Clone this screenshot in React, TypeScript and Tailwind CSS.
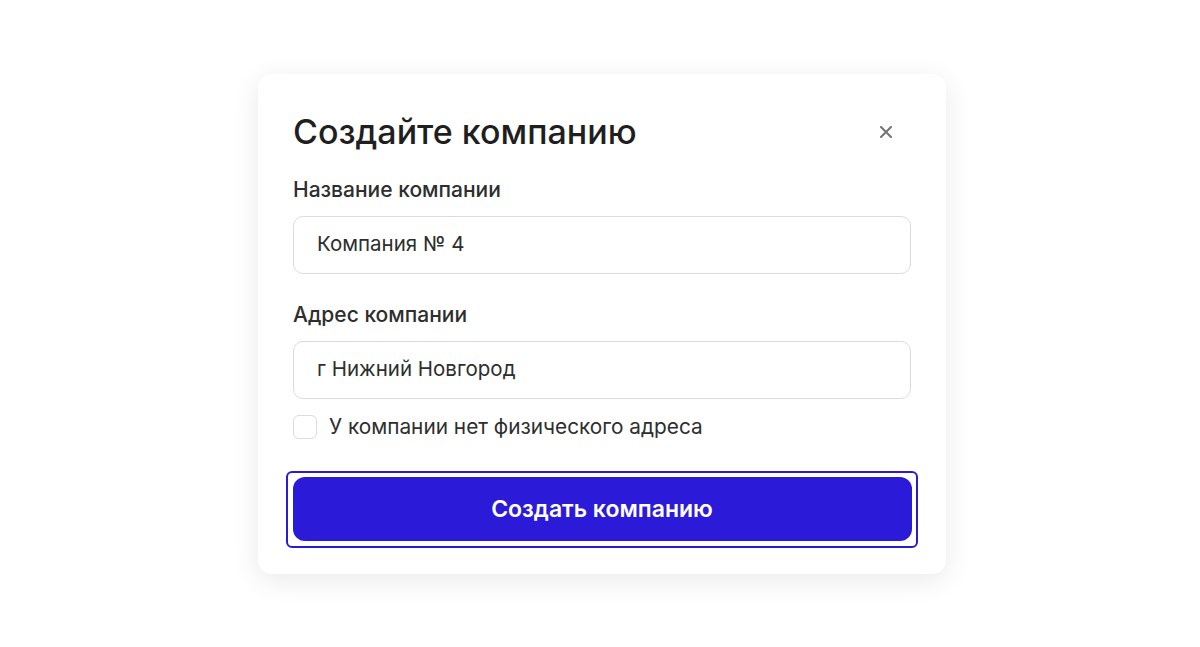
import React from "react";

export default function App() {
  return (
    <div className="flex h-[647px] w-full items-center justify-center bg-white pl-[4px]" style={{ fontFamily: "Inter, 'Noto Sans', sans-serif" }}>
      <div className="w-[688px] rounded-[14px] bg-white px-[35px] pt-[36px] pb-[26px] shadow-[0_6px_28px_rgba(0,0,0,0.09)]">
        <div className="flex items-center justify-between">
          <h1 className="text-[34px] font-medium leading-[44px] text-[#1f1f1f]">Создайте компанию</h1>
          <button className="mr-[13px] flex h-6 w-6 items-center justify-center text-[#737373]">
            <svg width="12" height="12" viewBox="0 0 12 12" fill="none">
              <path d="M1 1L11 11M11 1L1 11" stroke="currentColor" strokeWidth="2" strokeLinecap="round" />
            </svg>
          </button>
        </div>
        <div className="mt-[22px] text-[21px] font-medium leading-[28px] text-[#2e2e2e]">Название компании</div>
        <div className="mt-[12px] flex h-[58px] items-center rounded-[10px] border border-[#dcdcdc] px-[23px] text-[20.5px] text-[#2e2e2e]">
          Компания № 4
        </div>
        <div className="mt-[27px] text-[21px] font-medium leading-[28px] text-[#2e2e2e]">Адрес компании</div>
        <div className="mt-[12px] flex h-[58px] items-center rounded-[10px] border border-[#dcdcdc] px-[23px] text-[20.5px] text-[#2e2e2e]">
          г Нижний Новгород
        </div>
        <label className="mt-[16px] flex items-center gap-[12px]">
          <span className="h-6 w-6 shrink-0 rounded-[6px] border border-[#dcdcdc] bg-white" />
          <span className="text-[20.8px] leading-[24px] text-[#2e2e2e]">У компании нет физического адреса</span>
        </label>
        <div className="-mx-[7px] mt-[32px] rounded-[6px] border-[2.5px] border-[#2a1bcf] p-[4.5px]">
          <button className="flex h-[64px] w-full items-center justify-center rounded-[12px] bg-[#2c1ad9] text-[23px] font-semibold text-white">
            Создать компанию
          </button>
        </div>
      </div>
    </div>
  );
}
